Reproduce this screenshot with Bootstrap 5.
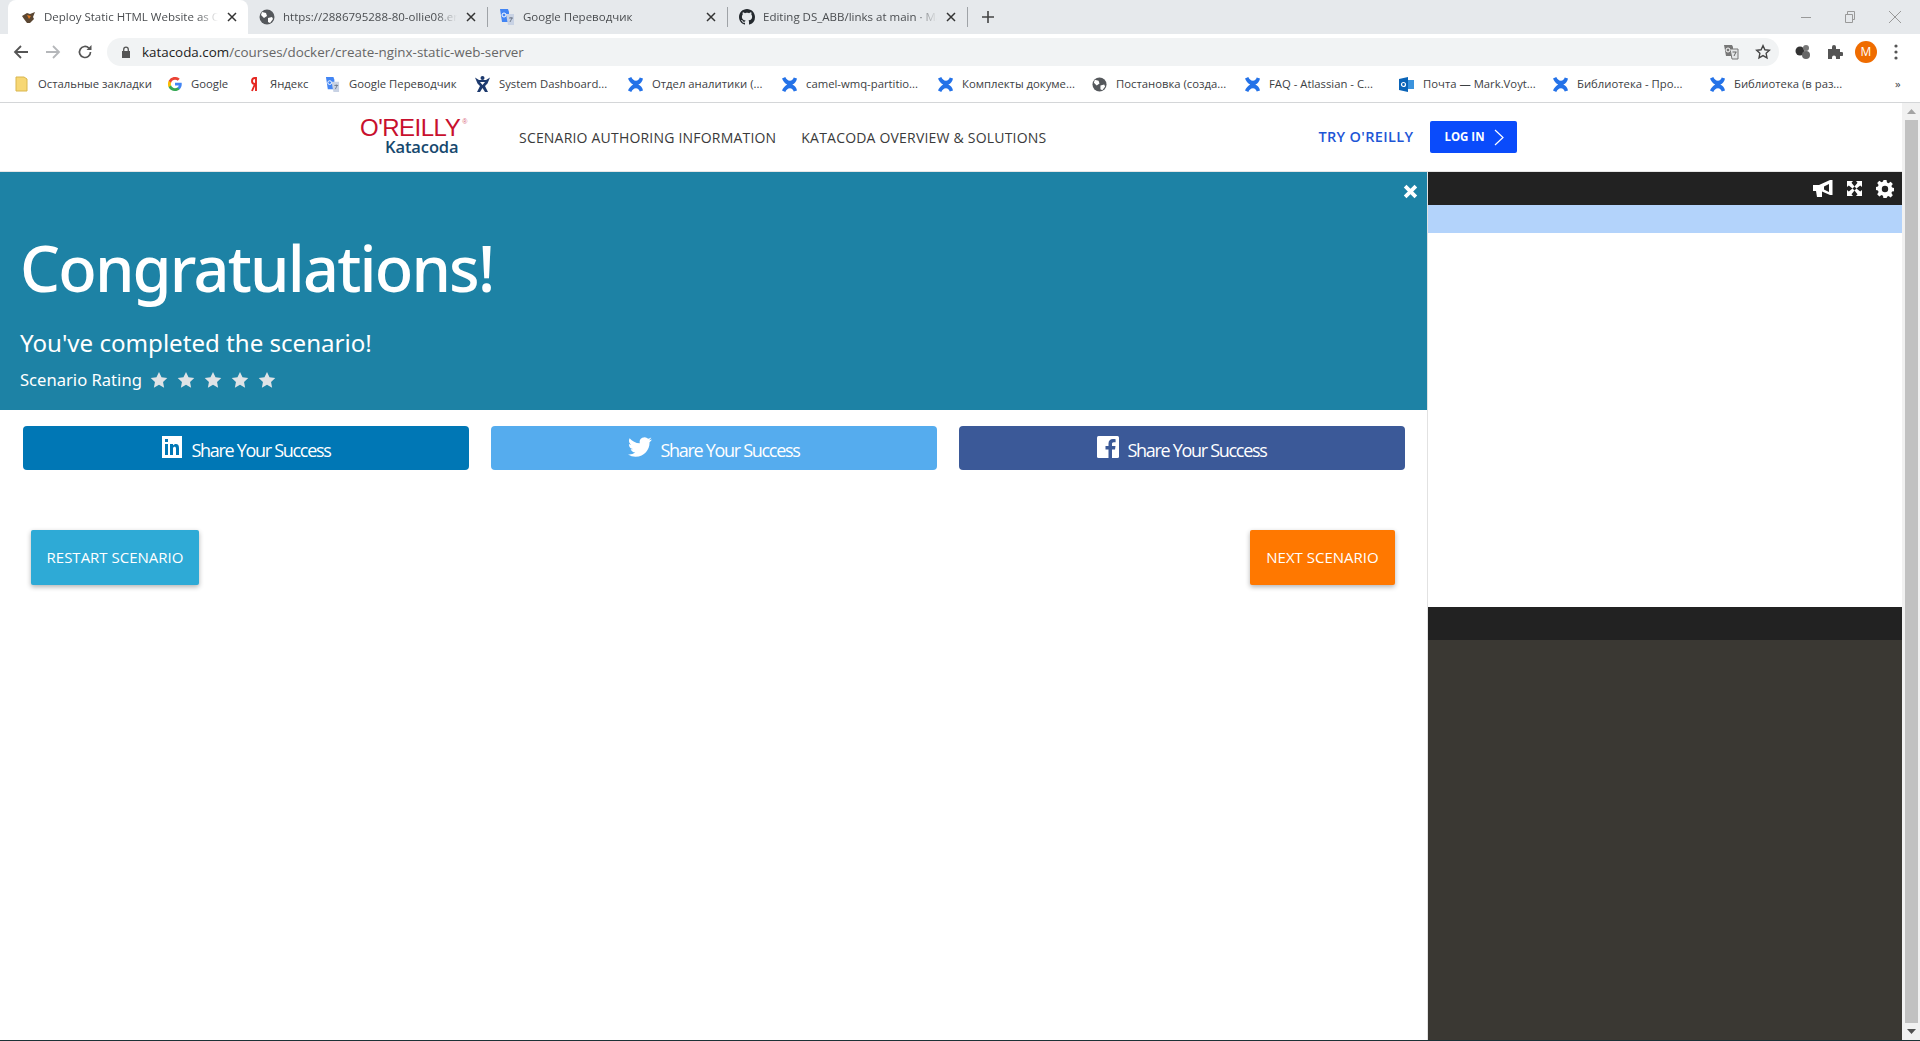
<!DOCTYPE html>
<html lang="en">
<head>
    <meta charset="UTF-8">
    <meta name="viewport" content="width=device-width, initial-scale=1.0">
    <title>Deploy Static HTML Website as Container</title>
    <link href="https://cdn.jsdelivr.net/npm/bootstrap@5.3.3/dist/css/bootstrap.min.css" rel="stylesheet">
    <style>
        html, body { height: 100%; overflow: hidden; }
        body { font-family: "Open Sans", "Liberation Sans", sans-serif; color: #333; background: #fff; }
        .wrap { height: 1041px; border-bottom: 1px solid #1b3236; }

        /* browser chrome */
        .tabstrip { height: 34px; background: #e6e9ec; padding-left: 8px; font-size: 11.5px; color: #4a4d50; }
        .tabx { height: 34px; width: 239px; padding: 0 10px 0 11px; gap: 8px; }
        .tabx.now { width: 240px; background: #fff; border-radius: 8px 8px 0 0; padding-left: 13px; gap: 8px; }
        .tabx .ttl { flex: 1; overflow: hidden; white-space: nowrap; min-width: 0; -webkit-mask-image: linear-gradient(to right, #000 88%, transparent); mask-image: linear-gradient(to right, #000 88%, transparent); }
        .tabx .cls { width: 12px; height: 12px; flex: none; }
        .tabsep { width: 1px; height: 20px; background: #9fa3a7; flex: none; }
        .plus { margin-left: 13px; }
        .winbtns { margin-left: auto; gap: 32px; padding-right: 18px; }
        .toolbar { height: 34px; background: #fff; padding: 2px 0 0 13px; }
        .tb-ico { width: 16px; height: 16px; flex: none; }
        .pill { width: 1672px; height: 28px; background: #f1f3f4; border-radius: 14px; margin-left: 14px; padding: 0 0 0 14px; font-size: 13.4px; color: #666; }
        .pill b { font-weight: 400; color: #222; }
        .pill .addr { margin-left: 11px; flex: 1; }
        .avatar { width: 22px; height: 22px; border-radius: 50%; background: #ef6c00; color: #fff; font-size: 12px; line-height: 22px; text-align: center; margin-left: 12px; }
        .dots { margin-left: 17px; }
        .bookmarks { display: grid; height: 35px; padding: 0 0 2px 15px; align-items: center; font-size: 11.3px; color: #3c4043; background: #fff; border-bottom: 1px solid #d4d6d8;
            grid-template-columns: 153px 82px 75px 150px 153px 154px 156px 154px 153px 154px 154px 157px 185px 20px; }
        .bm { gap: 9px; white-space: nowrap; overflow: hidden; }
        .bm svg { flex: none; }
        .bm .first { margin-left: 1px; }

        /* site header */
        .sitenav { height: 69px; padding: 0; border-bottom: 1px solid #e6e6e6; flex-wrap: nowrap; justify-content: flex-start; }
        .brand { margin-left: 360px; width: 159px; }
        .brand .orly { display: block; height: 20px; line-height: 20px; color: #c8102e; font-family: "Liberation Sans", sans-serif; font-size: 24px; letter-spacing: -.5px; white-space: nowrap; }
        .brand .orly sup { font-size: 7px; top: -12px; margin-left: 2px; line-height: 0; color: #d8677a; letter-spacing: 0; }
        .brand .kata { display: block; height: 18px; line-height: 18px; margin-left: 25px; color: #16486e; font-size: 16.5px; font-weight: 600; letter-spacing: -.1px; }
        .navlnk { font-size: 14px; font-weight: 400; color: #3a3a3a; letter-spacing: .2px; margin-right: 25px; text-decoration: none; white-space: nowrap; }
        .try { margin-left: 247px; color: #1e56d6; font-weight: 600; font-size: 14.5px; letter-spacing: .35px; text-decoration: none; white-space: nowrap; }
        .loginbtn { margin-left: 17px; width: 87px; height: 32px; background: #0a4bfb; color: #fff; font-size: 11.5px; font-weight: 700; padding: 0; border-radius: 2px; gap: 9px; border: 0; }

        /* left panel */
        .leftcol { width: 1427px; flex: none; box-shadow: 1px 0 0 #e2e2e2; position: relative; }
        .hero { height: 238px; background: #1d82a5; color: #fff; padding: 60px 20px 0; position: relative; font-family: "Noto Sans", sans-serif; }
        .hero h1 { font-size: 63px; font-weight: 500; line-height: 72px; margin: 0; letter-spacing: -1.8px; }
        .hero h2 { font-size: 24.1px; font-weight: 400; line-height: 34px; margin: 22px 0 0; }
        .hero .rate { font-size: 16.6px; margin-top: 8px; line-height: 24px; gap: 8px; }
        .stars { gap: 9px; }
        .closex { position: absolute; right: 9px; top: 12px; width: 15px; height: 15px; }
        .share { padding: 16px 22px 0 23px; gap: 22px; }
        .sharebtn { flex: 1; height: 44px; color: #fff; border: 0; border-radius: 4px; font-size: 18px; letter-spacing: -1.3px; padding: 0; gap: 8px; }
        .sharebtn span { padding-top: 4px; }
        .sharebtn svg { margin-top: -2px; }
        .sharebtn:hover { color: #fff; }
        .li { background: #0077b5; } .tw { background: #55acee; } .fb { background: #3b5998; }
        .actions { padding: 60px 32px 0 31px; }
        .actbtn { height: 55px; border: 0; border-radius: 2px; color: #fff; font-size: 15px; padding: 0; box-shadow: 0 2px 5px rgba(0,0,0,.3); }
        .actbtn:hover { color: #fff; }
        .restart { background: #2eaad6; width: 168px; } .nextb { background: #ff7800; width: 145px; }

        /* right panel */
        .rightcol { width: 475px; flex: none; }
        .rhead { height: 33px; background: #222; padding-right: 8px; gap: 13px; }
        .rblue { height: 28px; background: #b3d3fb; }
        .rwhite { height: 374px; background: #fff; }
        .rdark { height: 33px; background: #222; }
        .rolive { background: #3a3833; flex: 1; }

        .sbar { width: 18px; flex: none; background: #f1f1f1; }
        .sbar .thumb { flex: 1; background: #c1c1c1; margin: 0 2px 0 3px; }
        .sbar .arr { height: 17px; }
    </style>
</head>
<body>
<svg width="0" height="0" class="position-absolute">
    <symbol id="x-ico" viewBox="0 0 12 12"><path d="M2 2l8 8M10 2l-8 8" stroke="#333" stroke-width="1.5" fill="none"/></symbol>
    <symbol id="globe" viewBox="0 0 16 16"><circle cx="8" cy="8" r="7.5" fill="#55585c"/><path d="M3 3l4 1 1 3-3 2-3-3zM9 9l4-1 1 2-3 4-2-1z" fill="#fff"/></symbol>
    <symbol id="gtr" viewBox="0 0 16 16"><path d="M1 0h8l1 3v10H3z" fill="#4285f4"/><path d="M7 5h8v11H9z" fill="#c8d2e4"/><circle cx="5" cy="6" r="2" fill="none" stroke="#fff" stroke-width="1"/><path d="M10 9h4M12 8v1M11 13l2-4" stroke="#5f6b7c" stroke-width=".8" fill="none"/></symbol>
    <symbol id="jx" viewBox="0 0 16 16"><path d="M0 1.500l3.500-1.500c1 2 2.500 4 5 4 2 0 3.500-1.500 4-3.500l3.500 1c-.5 3-2.500 5.500-5 6.500 2.500 1 4.500 3.500 5 6.500l-3.500 1c-.5-2-2-3.500-4-3.500-2.500 0-4 2-5 4L0 14.500C1 12 3 9.500 5.500 8 3 6.500 1 4 0 1.500z" fill="#2472e8"/></symbol>
    <symbol id="gh" viewBox="0 0 16 16"><path fill="#24292e" d="M8 0C3.58 0 0 3.58 0 8c0 3.54 2.29 6.53 5.47 7.59.4.07.55-.17.55-.38 0-.19-.01-.82-.01-1.49-2.01.37-2.53-.49-2.69-.94-.09-.23-.48-.94-.82-1.13-.28-.15-.68-.52-.01-.53.63-.01 1.08.58 1.23.82.72 1.21 1.87.87 2.33.66.07-.52.28-.87.51-1.07-1.78-.2-3.64-.89-3.64-3.95 0-.87.31-1.59.82-2.15-.08-.2-.36-1.02.08-2.12 0 0 .67-.21 2.2.82.64-.18 1.32-.27 2-.27s1.36.09 2 .27c1.53-1.04 2.2-.82 2.2-.82.44 1.1.16 1.92.08 2.12.51.56.82 1.27.82 2.15 0 3.07-1.87 3.75-3.65 3.95.29.25.54.73.54 1.48 0 1.07-.01 1.93-.01 2.2 0 .21.15.46.55.38A8 8 0 0016 8c0-4.42-3.58-8-8-8z"/></symbol>
    <symbol id="star" viewBox="0 0 20 20"><path d="M10 1l2.8 5.9 6.4.8-4.7 4.4 1.2 6.4L10 15.4l-5.700 3.1 1.200-6.400L.8 7.700l6.400-.8z" fill="#dfe3e6"/></symbol>
</svg>
<div class="wrap d-flex flex-column">
    <div class="tabstrip d-flex align-items-center">
        <div class="tabx now d-flex align-items-center">
            <svg width="15" height="13" viewBox="0 0 15 13"><path d="M1 5l5-3 3 1 5-2-2 5 1 2-4 4H6L3 8z" fill="#5a4632"/><path d="M6 4l4 1-2 3z" fill="#e0791f"/></svg>
            <span class="ttl">Deploy Static HTML Website as Container</span>
            <svg class="cls"><use href="#x-ico"/></svg>
        </div>
        <div class="tabx d-flex align-items-center">
            <svg width="16" height="16"><use href="#globe"/></svg>
            <span class="ttl">https://2886795288-80-ollie08.environments</span>
            <svg class="cls"><use href="#x-ico"/></svg>
        </div>
        <div class="tabsep"></div>
        <div class="tabx d-flex align-items-center">
            <svg width="16" height="16"><use href="#gtr"/></svg>
            <span class="ttl">Google Переводчик</span>
            <svg class="cls"><use href="#x-ico"/></svg>
        </div>
        <div class="tabsep"></div>
        <div class="tabx d-flex align-items-center">
            <svg width="16" height="16"><use href="#gh"/></svg>
            <span class="ttl">Editing DS_ABB/links at main · Mark</span>
            <svg class="cls"><use href="#x-ico"/></svg>
        </div>
        <div class="tabsep"></div>
        <svg class="plus" width="14" height="14" viewBox="0 0 14 14"><path d="M7 1v12M1 7h12" stroke="#444" stroke-width="1.6"/></svg>
        <div class="winbtns d-flex align-items-center">
            <svg width="12" height="12" viewBox="0 0 12 12"><path d="M1 6.500h10" stroke="#999"/></svg>
            <svg width="12" height="12" viewBox="0 0 12 12"><path d="M1.500 3.500h7v8h-7zM3.500 3V.5h7v8H9" stroke="#999" fill="none"/></svg>
            <svg width="14" height="14" viewBox="0 0 14 14"><path d="M1 1l12 12M13 1L1 13" stroke="#999"/></svg>
        </div>
    </div>
    <div class="toolbar d-flex align-items-center">
        <svg class="tb-ico" viewBox="0 0 16 16"><path d="M15 8H2M8 2L2 8l6 6" stroke="#555" stroke-width="1.8" fill="none"/></svg>
        <svg class="tb-ico ms-3" viewBox="0 0 16 16"><path d="M1 8h13M8 2l6 6-6 6" stroke="#b5b7ba" stroke-width="1.8" fill="none"/></svg>
        <svg class="tb-ico ms-3" viewBox="0 0 16 16"><path d="M13.500 8a5.500 5.500 0 11-1.600-3.900" stroke="#555" stroke-width="1.7" fill="none"/><path d="M14.500 1v5h-5z" fill="#555"/></svg>
        <div class="pill d-flex align-items-center">
            <svg width="10" height="13" viewBox="0 0 10 13"><path d="M1 5h8v7H1z" fill="#555"/><path d="M2.700 5V3.500a2.300 2.300 0 014.600 0V5" stroke="#555" stroke-width="1.3" fill="none"/></svg>
            <span class="addr"><b>katacoda.com</b>/courses/docker/create-nginx-static-web-server</span>
            <svg class="me-3" width="16" height="16" viewBox="0 0 16 16"><path d="M1 1h8l1 2v9H3z" fill="#777"/><path d="M7 5h8v10H9z" fill="#e4e6e8" stroke="#777"/><circle cx="5" cy="6" r="2" stroke="#fff" fill="none"/><path d="M9.500 8h4M11 12l2-4" stroke="#666" fill="none"/></svg>
            <svg class="me-2" width="16" height="16" viewBox="0 0 20 20"><path d="M10 2l2.400 5.200 5.600.7-4.100 3.800 1.100 5.600L10 14.500l-5 2.800 1.100-5.600L2 7.900l5.600-.7z" fill="none" stroke="#444" stroke-width="1.7"/></svg>
        </div>
        <svg class="ms-3" width="16" height="16" viewBox="0 0 16 16"><circle cx="5" cy="7" r="4.500" fill="#333"/><circle cx="11" cy="4" r="3" fill="#777"/><circle cx="11" cy="11" r="4" fill="#666"/></svg>
        <svg class="ms-3" width="16" height="16" viewBox="0 0 16 16"><path d="M1 5h4V3a2 2 0 014 0v2h4v3h1.500a2 2 0 010 4H13v3H9v-1.500a2 2 0 00-4 0V15H1z" fill="#555"/></svg>
        <div class="avatar">M</div>
        <svg class="dots" width="4" height="16" viewBox="0 0 4 16"><circle cx="2" cy="2" r="1.600" fill="#555"/><circle cx="2" cy="8" r="1.600" fill="#555"/><circle cx="2" cy="14" r="1.600" fill="#555"/></svg>
    </div>
    <div class="bookmarks">
        <div class="bm d-flex align-items-center"><svg width="13" height="16" viewBox="0 0 13 16"><path d="M1 1h8l3 2v12H1z" fill="#f7d774" stroke="#d9b64e"/></svg><span class="first">Остальные закладки</span></div>
        <div class="bm d-flex align-items-center"><svg width="14" height="14" viewBox="0 0 16 16"><path d="M15.700 8.200c0-.6 0-1.100-.1-1.600H8v3h4.300a3.700 3.700 0 01-1.600 2.400v2h2.600c1.500-1.400 2.400-3.400 2.400-5.800z" fill="#4285f4"/><path d="M8 16c2.200 0 4-.7 5.300-2l-2.600-2c-.7.500-1.600.8-2.700.8-2.100 0-3.900-1.400-4.500-3.300H.8v2.100A8 8 0 008 16z" fill="#34a853"/><path d="M3.500 9.500a4.800 4.800 0 010-3V4.400H.8a8 8 0 000 7.200z" fill="#fbbc05"/><path d="M8 3.200c1.200 0 2.300.4 3.100 1.200l2.300-2.300A8 8 0 00.8 4.400l2.700 2.100C4.100 4.600 5.900 3.200 8 3.200z" fill="#ea4335"/></svg>Google</div>
        <div class="bm d-flex align-items-center"><svg width="11" height="16" viewBox="0 0 11 16"><path d="M6 15V2H5C3 2 2 3 2 5s1 3 3 3h1M5 8l-3 7" stroke="#e52620" stroke-width="1.900" fill="none"/></svg>Яндекс</div>
        <div class="bm d-flex align-items-center"><svg width="15" height="15"><use href="#gtr"/></svg>Google Переводчик</div>
        <div class="bm d-flex align-items-center"><svg width="15" height="16" viewBox="0 0 15 16"><circle cx="7.500" cy="2" r="2" fill="#1d3a6e"/><path d="M0 1.500l4 2.500h7l4-2.500-2.500 6-2.500 2.500 3 6h-3L7.500 12 5 16H2l3-6-2.500-2.500zM5 6l2.500 3L10 6z" fill-rule="evenodd" fill="#1d3a6e"/></svg>System Dashboard...</div>
        <div class="bm d-flex align-items-center"><svg width="15" height="15"><use href="#jx"/></svg>Отдел аналитики (...</div>
        <div class="bm d-flex align-items-center"><svg width="15" height="15"><use href="#jx"/></svg>camel-wmq-partitio...</div>
        <div class="bm d-flex align-items-center"><svg width="15" height="15"><use href="#jx"/></svg>Комплекты докуме...</div>
        <div class="bm d-flex align-items-center"><svg width="15" height="15"><use href="#globe"/></svg>Постановка (созда...</div>
        <div class="bm d-flex align-items-center"><svg width="15" height="15"><use href="#jx"/></svg>FAQ - Atlassian - C...</div>
        <div class="bm d-flex align-items-center"><svg width="15" height="15" viewBox="0 0 15 15"><path d="M0 2l9-2v15l-9-2z" fill="#0a64b8"/><path d="M9 3h6v9H9z" fill="#3b93dd"/><circle cx="4.500" cy="7.500" r="2" fill="none" stroke="#fff" stroke-width="1.200"/></svg>Почта — Mark.Voyt...</div>
        <div class="bm d-flex align-items-center"><svg width="15" height="15"><use href="#jx"/></svg>Библиотека - Про...</div>
        <div class="bm d-flex align-items-center"><svg width="15" height="15"><use href="#jx"/></svg>Библиотека (в раз...</div>
        <div class="bm">»</div>
    </div>
    <div class="d-flex flex-grow-1 overflow-hidden">
        <div class="d-flex flex-column flex-grow-1">
            <nav class="navbar sitenav">
                <a class="brand text-decoration-none" href="#"><span class="orly">O'REILLY<sup>®</sup></span><span class="kata">Katacoda</span></a>
                <a class="navlnk" href="#">SCENARIO AUTHORING INFORMATION</a>
                <a class="navlnk" href="#">KATACODA OVERVIEW &amp; SOLUTIONS</a>
                <a class="try" href="#">TRY O'REILLY</a>
                <button class="btn loginbtn d-flex align-items-center justify-content-center" type="button">LOG IN
                    <svg width="10" height="17" viewBox="0 0 10 17"><path d="M1 1l8 7.500-8 7.500" stroke="#fff" fill="none" stroke-width="1.200"/></svg>
                </button>
            </nav>
            <div class="d-flex flex-grow-1">
                <div class="leftcol">
                    <div class="hero">
                        <svg class="closex" viewBox="0 0 14 14"><path d="M2 2l10 10M12 2L2 12" stroke="#fff" stroke-width="3.500"/></svg>
                        <h1>Congratulations!</h1>
                        <h2>You've completed the scenario!</h2>
                        <div class="rate d-flex align-items-center">Scenario Rating
                            <div class="stars d-flex">
                                <svg width="18" height="18"><use href="#star"/></svg>
                                <svg width="18" height="18"><use href="#star"/></svg>
                                <svg width="18" height="18"><use href="#star"/></svg>
                                <svg width="18" height="18"><use href="#star"/></svg>
                                <svg width="18" height="18"><use href="#star"/></svg>
                            </div>
                        </div>
                    </div>
                    <div class="share d-flex">
                        <a class="btn sharebtn li d-flex align-items-center justify-content-center" href="#">
                            <svg width="22" height="24" viewBox="0 0 22 24"><path d="M1 1h20v22H1z" fill="#fff"/><path d="M4 9h3v11H4zM4 4h3v3H4zM9 9h3v1.500c1-1.500 6-3 6 2.500v7h-3v-6.500c0-2.500-3-2-3 0V20H9z" fill="#0077b5"/></svg>
                            <span>Share Your Success</span></a>
                        <a class="btn sharebtn tw d-flex align-items-center justify-content-center" href="#">
                            <svg width="24" height="24" viewBox="0 0 24 24"><path fill="#fff" d="M23.953 4.57a10 10 0 01-2.825.775 4.958 4.958 0 002.163-2.723c-.951.555-2.005.959-3.127 1.184a4.92 4.92 0 00-8.384 4.482C7.69 8.095 4.067 6.13 1.64 3.162a4.822 4.822 0 00-.666 2.475c0 1.71.87 3.213 2.188 4.096a4.904 4.904 0 01-2.228-.616v.06a4.923 4.923 0 003.946 4.827 4.996 4.996 0 01-2.212.085 4.936 4.936 0 004.604 3.417 9.867 9.867 0 01-6.102 2.105c-.39 0-.779-.023-1.17-.067a13.995 13.995 0 007.557 2.209c9.053 0 13.998-7.496 13.998-13.985 0-.21 0-.42-.015-.63A9.935 9.935 0 0024 4.59z"/></svg>
                            <span>Share Your Success</span></a>
                        <a class="btn sharebtn fb d-flex align-items-center justify-content-center" href="#">
                            <svg width="22" height="22" viewBox="0 0 22 22"><rect width="22" height="22" rx="1.500" fill="#fff"/><path d="M15 22v-8.500h3l.5-3.500H15V8c0-1 .4-1.700 1.800-1.700h1.800V3.200C18 3.100 17 3 15.900 3 13.300 3 11.500 4.600 11.500 7.500V10h-3v3.500h3V22z" fill="#3b5998"/></svg>
                            <span>Share Your Success</span></a>
                    </div>
                    <div class="actions d-flex justify-content-between">
                        <a class="btn actbtn restart d-flex align-items-center justify-content-center" href="#">RESTART SCENARIO</a>
                        <a class="btn actbtn nextb d-flex align-items-center justify-content-center" href="#">NEXT SCENARIO</a>
                    </div>
                </div>
                <div class="rightcol d-flex flex-column">
                    <div class="rhead d-flex align-items-center justify-content-end">
                        <svg width="20" height="18" viewBox="0 0 20 18"><path fill="#fff" fill-rule="evenodd" d="M0 5h6l11-5h2.500v15H17L9 11.500V17H4l-1-6H0zM11 6.500v3l5 2.500V4z"/></svg>
                        <svg width="17" height="17" viewBox="0 0 17 17"><path d="M1 1h6L5.500 2.800 8.500 6.500l-2 2-3.700-3L1 7zM16 1v6l-1.800-1.500-3.700 3-2-2 3-3.700L10 1zM1 16v-6l1.800 1.500 3.700-3 2 2-3 3.700L7 16zM16 16h-6l1.500-1.800-3-3.700 2-2 3.700 3L16 10z" fill="#fff"/></svg>
                        <svg width="18" height="18" viewBox="0 0 18 18"><path fill="#fff" fill-rule="evenodd" d="M7.500 0h3l.5 2.500 1.500.7 2.200-1.400 2.100 2.100-1.400 2.200.7 1.500 2.400.5v3l-2.400.5-.7 1.500 1.400 2.200-2.100 2.100-2.200-1.400-1.500.7-.5 2.300h-3L7 15.700l-1.500-.7-2.200 1.400-2.100-2.100 1.400-2.200-.7-1.500L0 10.100v-3l1.900-.5.700-1.500-1.400-2.200 2.100-2.100L5.500 2.200 7 1.500zM9 5.800a3 3 0 100 6.400 3 3 0 000-6.400z"/></svg>
                    </div>
                    <div class="rblue"></div>
                    <div class="rwhite"></div>
                    <div class="rdark"></div>
                    <div class="rolive"></div>
                </div>
            </div>
        </div>
        <div class="sbar d-flex flex-column">
            <div class="arr d-flex align-items-center justify-content-center"><svg width="9" height="5" viewBox="0 0 9 5"><path d="M4.500 0L9 5H0z" fill="#a3a3a3"/></svg></div>
            <div class="thumb"></div>
            <div class="arr d-flex align-items-center justify-content-center"><svg width="9" height="5" viewBox="0 0 9 5"><path d="M4.500 5L9 0H0z" fill="#505050"/></svg></div>
        </div>
    </div>
</div>
<script src="https://cdn.jsdelivr.net/npm/bootstrap@5.3.3/dist/js/bootstrap.bundle.min.js"></script>
</body>
</html>
